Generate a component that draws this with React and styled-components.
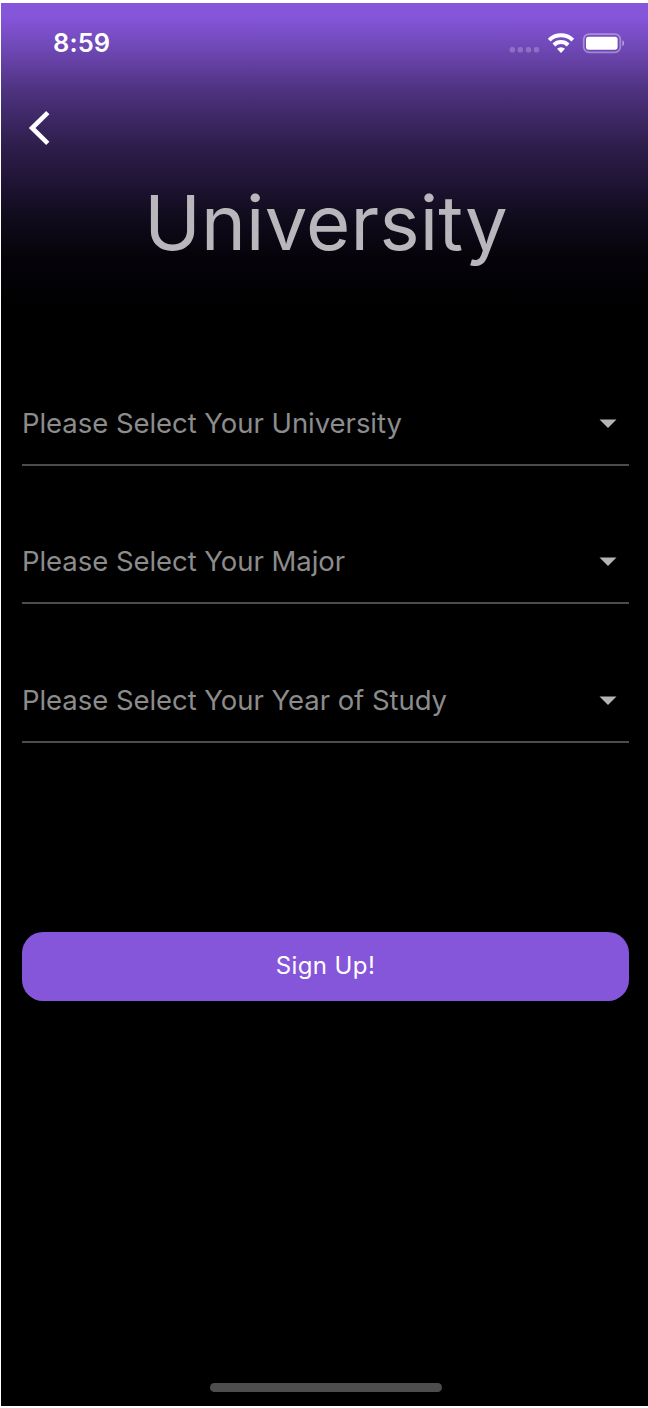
import React from "react";
import styled, { createGlobalStyle } from "styled-components";

const GlobalStyle = createGlobalStyle`
  * { box-sizing: border-box; }
  body { margin: 0; background: #fff; }
`;

const Screen = styled.main`
  display: flex;
  flex-direction: column;
  width: 647px;
  height: 1403px;
  margin: 3px 0 0 1px;
  overflow: hidden;
  color: #fff;
  font-family: Inter, "Liberation Sans", sans-serif;
  background: linear-gradient(
    180deg,
    #8555da 0,
    #8555da 14px,
    #6e47b3 47px,
    #4c317d 90px,
    #2d1d4a 145px,
    #22163a 172px,
    #100b1c 215px,
    #050309 255px,
    #000 305px
  ) #000;
`;

const StatusBar = styled.header`
  display: flex;
  flex: none;
  align-items: center;
  justify-content: space-between;
  height: 80px;
  padding: 0 23px 0 52px;
`;

const Time = styled.time`
  font-size: 25.5px;
  font-weight: 600;
  line-height: 30px;
  letter-spacing: 0.1px;
`;

const StatusIcons = styled.svg`
  display: block;
  width: 116px;
  height: 22px;
`;

const BackButton = styled.button`
  display: flex;
  flex: none;
  width: 60px;
  height: 68px;
  padding: 28px 0 0 27px;
  border: 0;
  background: none;
  color: inherit;
`;

const Title = styled.h1`
  flex: none;
  margin: 25px 0 1px;
  padding-left: 3px;
  color: #b9b6bc;
  font-size: 76px;
  font-weight: 400;
  line-height: 92px;
  letter-spacing: 0.2px;
  text-align: center;
  white-space: nowrap;
`;

const Form = styled.form`
  display: flex;
  flex-direction: column;
  padding: 117.6px 19px 0 21px;
`;

const SelectField = styled.div`
  display: flex;
  align-items: flex-start;
  justify-content: space-between;
  height: 79px;
  margin-bottom: 59.9px;
  padding: 19px 12px 0 0;
  border-bottom: 2px solid #4c4c4c;
`;

const Placeholder = styled.span`
  color: #8c8c8c;
  font-size: 27.5px;
  font-weight: 400;
  line-height: 34px;
  letter-spacing: -0.05px;
  white-space: nowrap;
`;

const Caret = styled.svg`
  flex: none;
  width: 18px;
  height: 10px;
  margin-top: 13px;
`;

const SubmitButton = styled.button`
  height: 69px;
  margin-top: 128.3px;
  padding: 0;
  border: 0;
  border-radius: 21px;
  background: #8555da;
  color: #fff;
  font: 400 24px/30px Inter, sans-serif;
  letter-spacing: 0.4px;
`;

const HomeIndicator = styled.div`
  flex: none;
  width: 232px;
  height: 9px;
  margin: auto auto 14px 209px;
  border-radius: 5px;
  background: #4d4d4d;
`;

const fields = [
  "Please Select Your University",
  "Please Select Your Major",
  "Please Select Your Year of Study",
];

export default function App() {
  return (
    <>
      <GlobalStyle />
      <Screen>
        <StatusBar>
          <Time>8:59</Time>
          <StatusIcons viewBox="0 0 116 22" aria-hidden="true">
            <g fill="#fff" fillOpacity="0.22">
              <rect x="0.6" y="15" width="5.4" height="5.4" rx="2" />
              <rect x="8.6" y="15" width="5.4" height="5.4" rx="2" />
              <rect x="16.8" y="15" width="5.4" height="5.4" rx="2" />
              <rect x="24.8" y="15" width="5.4" height="5.4" rx="2" />
            </g>
            <g fill="none" stroke="#fff" strokeWidth="4">
              <path d="M40.2 8.1a17 17 0 0 1 23.6 0" />
              <path d="M44.9 13a10.2 10.2 0 0 1 14.2 0" />
            </g>
            <path d="M52 21l-4-4.2a5.8 5.8 0 0 1 8 0z" fill="#fff" />
            <rect x="74.7" y="2.1" width="36.6" height="18.2" rx="5.4" fill="none" stroke="#fff" strokeOpacity="0.36" strokeWidth="1.8" />
            <rect x="77" y="4.7" width="31.6" height="13" rx="2.6" fill="#fff" />
            <path d="M113.4 8.2v6c2.2-1 2.2-5 0-6z" fill="#fff" fillOpacity="0.5" />
          </StatusIcons>
        </StatusBar>
        <BackButton type="button" aria-label="Back">
          <svg width="23" height="34" viewBox="0 0 23 34" fill="none">
            <path d="M19.8 1.7L4.1 17l15.7 15.3" stroke="#fff" strokeWidth="4.6" />
          </svg>
        </BackButton>
        <Title>University</Title>
        <Form>
          {fields.map((label) => (
            <SelectField key={label}>
              <Placeholder>{label}</Placeholder>
              <Caret viewBox="0 0 18 10">
                <path d="M0.5 0.5h17L9 9z" fill="#b5b5b5" />
              </Caret>
            </SelectField>
          ))}
          <SubmitButton type="button">Sign Up!</SubmitButton>
        </Form>
        <HomeIndicator />
      </Screen>
    </>
  );
}
